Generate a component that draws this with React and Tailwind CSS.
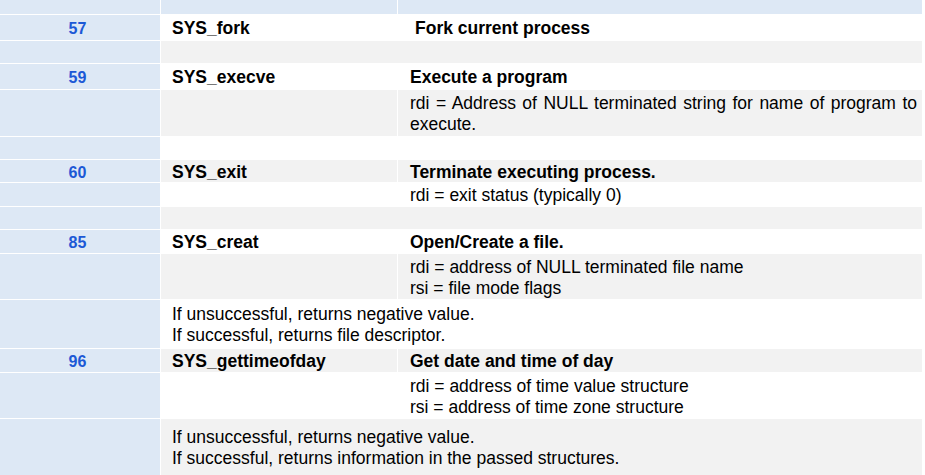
import React from "react";

const BLUE = "bg-[#dde8f5]";
const GRAY = "bg-[#f2f2f2]";
const WHITE = "bg-white";

function Num({ children }) {
  return (
    <div className={`${BLUE} flex items-center justify-center pr-[5px] pt-[2px] text-[16px] font-bold text-[#1c59d6]`}>
      {children}
    </div>
  );
}

function Blank() {
  return <div className={BLUE} />;
}

function Cell({ bg, className = "", children }) {
  return <div className={`${bg} flex items-center pt-[2px] ${className}`}>{children}</div>;
}

export default function App() {
  return (
    <div
      className="w-[925px] h-[475px] bg-white overflow-hidden text-black"
      style={{ fontFamily: '"Liberation Sans", Arial, sans-serif' }}
    >
      <div className="grid grid-cols-[160px_236px_524px] grid-rows-[14px_25px_22px_25px_46px_22px_22px_23px_22px_23px_45px_48px_23px_45px_56px] gap-px text-[17.5px] leading-[21px]">
        {/* header */}
        <div className={BLUE} />
        <div className={BLUE} />
        <div className={BLUE} />

        {/* 57 */}
        <Num>57</Num>
        <Cell bg={WHITE} className="pl-[11px] font-bold">SYS_fork</Cell>
        <Cell bg={WHITE} className="pl-[17px] font-bold">Fork current process</Cell>

        <Blank />
        <div className={`${GRAY} col-span-2`} />

        {/* 59 */}
        <Num>59</Num>
        <Cell bg={WHITE} className="pl-[11px] font-bold">SYS_execve</Cell>
        <Cell bg={WHITE} className="pl-[12px] font-bold">Execute a program</Cell>

        <Blank />
        <div className={GRAY} />
        <Cell bg={GRAY} className="pl-[12px] pr-[5px]">
          <p className="text-justify">rdi = Address of NULL terminated string for name of program to execute.</p>
        </Cell>

        <Blank />
        <div className={`${WHITE} col-span-2`} />

        {/* 60 */}
        <Num>60</Num>
        <Cell bg={GRAY} className="pl-[11px] font-bold">SYS_exit</Cell>
        <Cell bg={GRAY} className="pl-[12px] font-bold">Terminate executing process.</Cell>

        <Blank />
        <div className={WHITE} />
        <Cell bg={WHITE} className="pl-[12px]">rdi = exit status (typically 0)</Cell>

        <Blank />
        <div className={`${GRAY} col-span-2`} />

        {/* 85 */}
        <Num>85</Num>
        <Cell bg={WHITE} className="pl-[11px] font-bold">SYS_creat</Cell>
        <Cell bg={WHITE} className="pl-[12px] font-bold">Open/Create a file.</Cell>

        <Blank />
        <div className={GRAY} />
        <Cell bg={GRAY} className="pl-[12px]">
          <div>
            <div>rdi = address of NULL terminated file name</div>
            <div>rsi = file mode flags</div>
          </div>
        </Cell>

        <Blank />
        <Cell bg={WHITE} className="col-span-2 pl-[11px]">
          <div>
            <div>If unsuccessful, returns negative value.</div>
            <div>If successful, returns file descriptor.</div>
          </div>
        </Cell>

        {/* 96 */}
        <Num>96</Num>
        <Cell bg={GRAY} className="pl-[11px] font-bold">SYS_gettimeofday</Cell>
        <Cell bg={GRAY} className="pl-[12px] font-bold">Get date and time of day</Cell>

        <Blank />
        <div className={WHITE} />
        <Cell bg={WHITE} className="pl-[12px]">
          <div>
            <div>rdi = address of time value structure</div>
            <div>rsi = address of time zone structure</div>
          </div>
        </Cell>

        <Blank />
        <Cell bg={GRAY} className="col-span-2 pl-[11px]">
          <div>
            <div>If unsuccessful, returns negative value.</div>
            <div>If successful, returns information in the passed structures.</div>
          </div>
        </Cell>
      </div>
    </div>
  );
}
